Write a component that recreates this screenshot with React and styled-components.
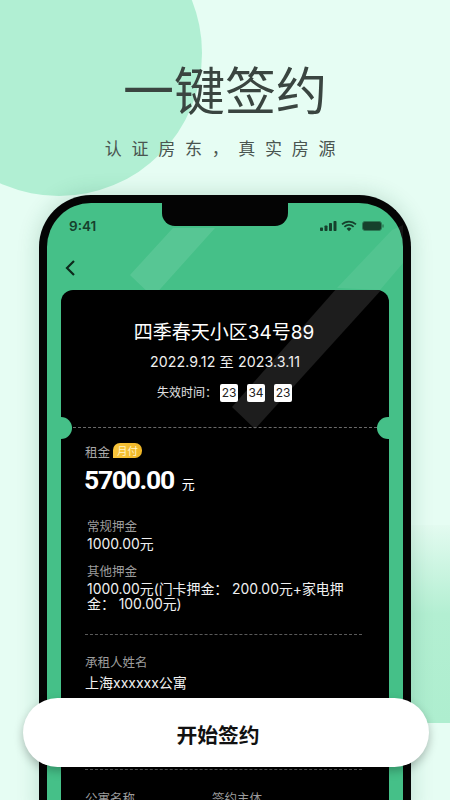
import React from "react";
import styled, { createGlobalStyle } from "styled-components";

const Global = createGlobalStyle`
  html, body { margin: 0; padding: 0; background: #e6fdf3; }
  body { font-family: Inter, "Noto Sans CJK SC", sans-serif; }
`;
const Page = styled.div`
  position: relative; width: 450px; height: 800px; overflow: hidden;
  background: #e6fdf3; display: flex; flex-direction: column; align-items: center;
`;
const TopCircle = styled.div`
  position: absolute; left: -84px; top: -90px; width: 286px; height: 286px; border-radius: 50%;
  background: #b1efd3;
`;
const SideBlob = styled.div`
  position: absolute; left: 300px; top: 525px; width: 200px; height: 198px; border-radius: 50px;
  background: linear-gradient(180deg, #e3fbf0 0%, #b3efd2 45%, #aeeecf 100%);
`;
const Title = styled.h1`
  position: relative; margin: 52px 0 0; height: 72px; font: 400 51px/72px "Noto Sans CJK SC", sans-serif;
  color: #3a4540; letter-spacing: 0;
`;
const Subtitle = styled.p`
  position: relative; margin: 12px 0 0; height: 24px; font: 400 17px/24px "Noto Sans CJK SC", sans-serif;
  color: #4a5550; letter-spacing: 9.7px; white-space: nowrap;
`;
const Phone = styled.div`
  position: relative; box-sizing: border-box; width: 372px; height: 620px; margin-top: 35px; flex: none;
  background: #45c088; border: 8px solid #040404; border-bottom: none; border-radius: 52px 52px 0 0;
  box-shadow: 0 0 22px rgba(20, 90, 60, .2);
`;
const Gloss = styled.svg`
  position: absolute; left: 0; top: 0; width: 356px; height: 120px;
`;
const Notch = styled.div`
  position: absolute; left: 115px; top: 0; width: 126px; height: 23px; background: #040404;
  border-radius: 0 0 13px 13px;
`;
const Status = styled.div`
  position: relative; display: flex; justify-content: space-between; align-items: center;
  height: 20px; padding: 13px 19px 0 22px; color: #16402c; font: 600 13.5px/20px Inter, sans-serif;
`;
const StatusIcons = styled.svg`
  width: 64px; height: 12px; display: block;
`;
const Back = styled.svg`
  position: relative; display: block; margin: 23px 0 0 16px; width: 14px; height: 18px;
`;
const Card = styled.div`
  position: relative; box-sizing: border-box; margin: 13px 14px 0; height: 520px;
  background: #000; border-radius: 12px 12px 0 0; color: #fff; overflow: hidden;
`;
const CardGloss = styled.svg`
  position: absolute; left: 0; top: 0; width: 328px; height: 140px;
`;
const Hole = styled.div`
  position: absolute; top: 127px; ${p => (p.$right ? "right: -10px" : "left: -11px")};
  width: 22px; height: 22px; border-radius: 50%; background: #45c088;
`;
const Head = styled.div`
  position: relative; height: 138px; box-sizing: border-box; padding-top: 28px; margin: 0 12px;
  text-align: center; border-bottom: 1px dashed #6a6a6a;
`;
const Name = styled.div`
  font: 400 19px/30px Inter, "Noto Sans CJK SC", sans-serif; color: #fff; padding-right: 2px;
`;
const Dates = styled.div`
  margin-top: 1px; font: 400 14.2px/26px Inter, "Noto Sans CJK SC", sans-serif; color: #f0f0f0; letter-spacing: .1px;
`;
const Timer = styled.div`
  display: flex; justify-content: center; align-items: center; margin-top: 9px; padding-right: 1px;
  font: 400 12px/18px Inter, "Noto Sans CJK SC", sans-serif; color: #e2e2e2;
`;
const TimeBox = styled.span`
  width: 18px; height: 18px; border-radius: 2px; margin-left: ${p => p.$first ? "3px" : "9px"}; background: #fff; color: #222;
  font: 400 12px/18px Inter, sans-serif; text-align: center;
`;
const Body = styled.div`
  position: relative; padding: 14px 24px 0;
`;
const RentRow = styled.div`
  display: flex; align-items: center; gap: 3px; height: 20px; font: 400 12.5px/20px "Noto Sans CJK SC", sans-serif; color: #a8a8a8;
`;
const Badge = styled.span`
  box-sizing: border-box; width: 29px; height: 15px; margin-top: -3px; padding-left: 4px;
  border-radius: 7px 7px 7px 0; background: linear-gradient(90deg, #f8c53c, #eeb526);
  font: 400 10.5px/15px "Noto Sans CJK SC", sans-serif; color: #fff4c4;
`;
const Amount = styled.div`
  display: flex; align-items: baseline; height: 40px; margin: -2px 0 0 -1px;
  font: 700 26.5px/40px Roboto, sans-serif; color: #fff; letter-spacing: -1.3px;
`;
const Unit = styled.span`
  margin-left: 8px; font: 400 13px/20px "Noto Sans CJK SC", sans-serif; letter-spacing: 0;
`;
const Deposit = styled.div`
  margin: ${p => p.$first ? "17px" : "10px"} 0 0 2px; width: 268px;
`;
const DepLabel = styled.div`
  font: 400 12.5px/18px "Noto Sans CJK SC", sans-serif; color: #9c9c9c;
`;
const DepValue = styled.div`
  font: 400 13.9px/15px Inter, "Noto Sans CJK SC", sans-serif; color: #f0f0f0; padding-top: 2px; letter-spacing: 0;
`;
const Rule = styled.div`
  width: 277px; border-top: 1px dashed #5a5a5a; margin-top: ${p => p.$m};
`;
const FieldLabel = styled.div`
  margin-top: 17px; font: 400 12.5px/20px "Noto Sans CJK SC", sans-serif; color: #9c9c9c;
`;
const FieldValue = styled.div`
  margin-top: 0; font: 400 14px/22px Inter, "Noto Sans CJK SC", sans-serif; color: #f0f0f0;
`;
const Columns = styled.div`
  display: grid; grid-template-columns: 127px 1fr; padding-top: 1px;
`;
const Cta = styled.button`
  position: absolute; left: 23px; top: 698px; width: 406px; height: 69px; border: 0; border-radius: 35px;
  padding: 3px 16px 0 0;
  background: #fff; color: #111; box-shadow: 0 4px 10px rgba(0, 0, 0, .25);
  font: 700 20.8px/66px "Noto Sans CJK SC", sans-serif;
`;

export default function App() {
  return (
    <Page>
      <Global />
      <TopCircle />
      <SideBlob />
      <Title>一键签约</Title>
      <Subtitle>认证房东，真实房源</Subtitle>
      <Phone>
        <Gloss viewBox="0 0 356 120">
          <path d="M83 72 L126 25 L168 25 L106 94 Z" fill="rgba(255,255,255,.1)" />
          <path d="M290 85 L345 27 L356 22 L356 60 L333 87 Z" fill="rgba(255,255,255,.07)" />
        </Gloss>
        <Notch />
        <Status>
          <span>9:41</span>
          <StatusIcons viewBox="0 0 64 12">
            <rect x="0" y="7.5" width="3" height="3.5" rx=".7" fill="#16402c" />
            <rect x="4.5" y="5.5" width="3" height="5.5" rx=".7" fill="#16402c" />
            <rect x="9" y="3" width="3" height="8" rx=".7" fill="#16402c" />
            <rect x="13.5" y="1" width="3" height="10" rx=".7" fill="#16402c" />
            <path d="M22 4.4a10 10 0 0 1 14 0M24.4 6.8a6.6 6.6 0 0 1 9.2 0" fill="none" stroke="#16402c" strokeWidth="1.7" />
            <path d="M26.6 8.8a3.4 3.4 0 0 1 4.8 0L29 11.2Z" fill="#16402c" />
            <rect x="42.5" y="1.5" width="19" height="9" rx="2.4" fill="#16402c" stroke="#2c7a55" />
            <rect x="62.3" y="4.2" width="1.4" height="3.6" rx=".7" fill="#2c7a55" />
          </StatusIcons>
        </Status>
        <Back viewBox="0 0 14 18">
          <path d="M11 2 L4 9 L11 16" fill="none" stroke="#0d2a1c" strokeWidth="2.2" />
        </Back>
        <Card>
          <CardGloss viewBox="0 0 328 140">
            <path d="M171 117 L276 -2 L322 -2 L194 139 Z" fill="#1d1d1d" />
          </CardGloss>
          <Hole />
          <Hole $right />
          <Head>
            <Name>四季春天小区34号89</Name>
            <Dates>2022.9.12 至 2023.3.11</Dates>
            <Timer>
              失效时间：
              <TimeBox $first>23</TimeBox>
              <TimeBox>34</TimeBox>
              <TimeBox>23</TimeBox>
            </Timer>
          </Head>
          <Body>
            <RentRow>租金<Badge>月付</Badge></RentRow>
            <Amount>5700.00<Unit>元</Unit></Amount>
            <Deposit $first>
              <DepLabel>常规押金</DepLabel>
              <DepValue>1000.00元</DepValue>
            </Deposit>
            <Deposit>
              <DepLabel>其他押金</DepLabel>
              <DepValue>1000.00元(门卡押金： 200.00元+家电押金： 100.00元)</DepValue>
            </Deposit>
            <Rule $m="22px" />
            <FieldLabel>承租人姓名</FieldLabel>
            <FieldValue>上海xxxxxx公寓</FieldValue>
            <Rule $m="75px" />
            <Columns>
              <FieldLabel>公寓名称</FieldLabel>
              <FieldLabel>签约主体</FieldLabel>
            </Columns>
          </Body>
        </Card>
      </Phone>
      <Cta>开始签约</Cta>
    </Page>
  );
}
